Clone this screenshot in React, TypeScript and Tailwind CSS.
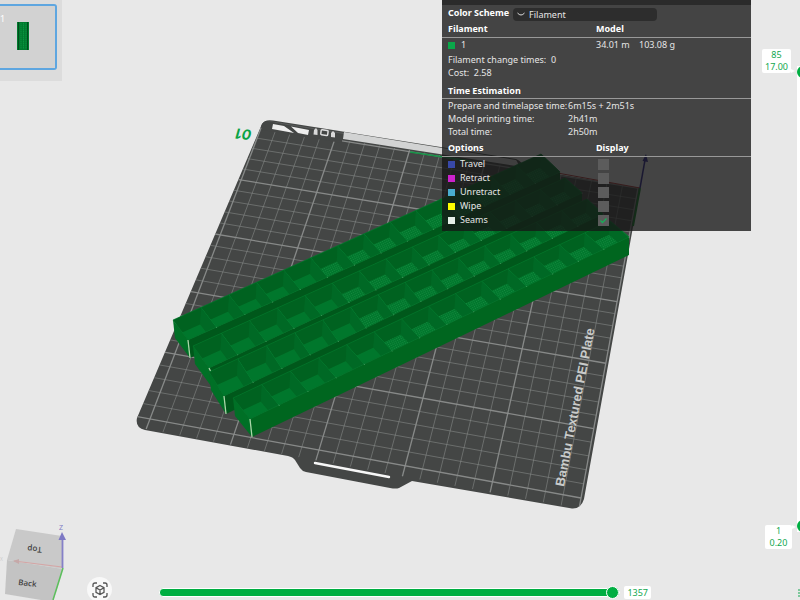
import React from "react";

type Pt = [number, number];

const pts = (list: Pt[]) => list.map((p) => `${p[0].toFixed(1)},${p[1].toFixed(1)}`).join(" ");
const mix = (a: Pt, b: Pt, t: number): Pt => [a[0] + (b[0] - a[0]) * t, a[1] + (b[1] - a[1]) * t];
const add = (a: Pt, d: Pt): Pt => [a[0] + d[0], a[1] + d[1]];

// Perspective map of the unit square onto a quad, corners in clockwise order.
function project([p0, p1, p2, p3]: [Pt, Pt, Pt, Pt]) {
  const dx1 = p1[0] - p2[0], dx2 = p3[0] - p2[0], sx = p0[0] - p1[0] + p2[0] - p3[0];
  const dy1 = p1[1] - p2[1], dy2 = p3[1] - p2[1], sy = p0[1] - p1[1] + p2[1] - p3[1];
  const det = dx1 * dy2 - dx2 * dy1;
  const g = (sx * dy2 - dx2 * sy) / det;
  const h = (dx1 * sy - sx * dy1) / det;
  return (u: number, v: number): Pt => {
    const w = g * u + h * v + 1;
    return [
      ((p1[0] - p0[0] + g * p1[0]) * u + (p3[0] - p0[0] + h * p3[0]) * v + p0[0]) / w,
      ((p1[1] - p0[1] + g * p1[1]) * u + (p3[1] - p0[1] + h * p3[1]) * v + p0[1]) / w,
    ];
  };
}

const bed = project([[261, 128], [638, 188], [581, 498], [150, 419]]);
const steps = Array.from({ length: 27 }, (_, i) => i - 1);

function Grid() {
  return (
    <g fill="none" stroke="#8b8d8c" clipPath="url(#plate)">
      {steps.map((i) => {
        const a = bed(i / 25, -0.005), b = bed(i / 25, 1.03);
        const c = bed(-0.04, i / 25), d = bed(1, i / 25);
        const bold = i % 5 === 0;
        return (
          <g key={i} strokeWidth={bold ? 1.3 : 0.8} strokeOpacity={bold ? 0.95 : 0.7}>
            <line x1={a[0]} y1={a[1]} x2={b[0]} y2={b[1]} />
            {i >= 0 && <line x1={c[0]} y1={c[1]} x2={d[0]} y2={d[1]} />}
          </g>
        );
      })}
    </g>
  );
}

interface Bar { bl: Pt; br: Pt; fr: Pt; fl: Pt }
const bars: Bar[] = [
  { bl: [173, 320], br: [541, 154], fr: [560, 172], fl: [188, 340] },
  { bl: [193, 346], br: [565, 178], fr: [582, 193], fl: [209, 368] },
  { bl: [209, 372], br: [587, 199], fr: [603, 214], fl: [224, 396] },
  { bl: [233, 398], br: [610, 221], fr: [629, 237], fl: [250, 419] },
];
const CELLS = 14;
const along = (i: number) => ((i / CELLS) * 1.08) / (1 + (0.08 * i) / CELLS);

function Tray({ bar, index }: { bar: Bar; index: number }) {
  const { bl, br, fr, fl } = bar;
  const down: Pt = [2, 18];
  const cells = Array.from({ length: CELLS }, (_, i) => {
    const a = mix(bl, br, along(i)), b = mix(bl, br, along(i + 1));
    const c = mix(fl, fr, along(i + 1)), d = mix(fl, fr, along(i));
    return { a, b, c, d, depth: [-1, 17 - i * 0.25] as Pt };
  });
  return (
    <g>
      <polygon points={pts([bl, fl, add(fl, down), add(bl, down)])} fill="#007026" />
      <polygon points={pts([fl, fr, add(fr, [0, 18]), add(fl, down)])} fill={index === 3 ? "#00661f" : "#00581b"} />
      <polygon points={pts([bl, br, fr, fl])} fill="#006b26" />
      {cells.map(({ a, b, c, d, depth }, i) => {
        const id = `cell-${index}-${i}`;
        return (
          <g key={id}>
            <clipPath id={id}><polygon points={pts([a, b, c, d])} /></clipPath>
            <g clipPath={`url(#${id})`}>
              <polygon points={pts([add(a, depth), add(b, depth), add(c, depth), add(d, depth)])} fill="#00772c" />
              <polygon points={pts([a, b, add(b, depth), add(a, depth)])} fill="#006220" />
              <polygon points={pts([b, c, add(c, depth), add(b, depth)])} fill="#006925" />
              {i > 4 && (
                <polygon points={pts([add(a, depth), add(b, depth), add(c, depth), add(d, depth)])} fill="url(#mesh)" />
              )}
            </g>
            <line x1={b[0]} y1={b[1]} x2={c[0]} y2={c[1]} stroke="#078537" strokeWidth="0.9" />
            <circle cx={c[0]} cy={c[1]} r="0.6" fill="#8cc79b" />
          </g>
        );
      })}
      <polygon points={pts([bl, br, fr, fl])} fill="none" stroke="#03782d" strokeWidth="0.7" />
      <line x1={fl[0]} y1={fl[1]} x2={fl[0] + 2} y2={fl[1] + (index === 1 ? 4 : 18)} stroke="#a9d6a8" strokeWidth="1.3" />
    </g>
  );
}

const PLATE =
  "M262 124 Q265 119 273 120.500 L516 159 Q522 161 525 169 L640 188 L584 499 Q581 509 572 508.500 L412 481 L399 488 Q396 489 390 488 L306 472 Q302 471 300 468 L295 460 Q293 457 288 456 L145 430 Q135 428 137 418 Z";

function Scene() {
  return (
    <svg className="absolute left-0 top-0 h-[600px] w-[800px]" viewBox="0 0 800 600" aria-label="Sliced plate preview">
      <defs>
        <clipPath id="plate"><path d={PLATE} /></clipPath>
        <pattern id="mesh" width="2" height="2" patternUnits="userSpaceOnUse" patternTransform="rotate(-25)">
          <rect width="1" height="1" fill="#27964e" fillOpacity="0.6" />
        </pattern>
      </defs>
      <path d={PLATE} fill="#444645" />
      <path d="M262.500 125 Q265 121 272 122 L516 161" fill="none" stroke="#6a6c6b" strokeWidth="0.6" />
      <Grid />
      <path d="M258 119 L300 128 L342 135 V143 L262 130 Z" fill="#444645" clipPath="url(#plate)" />
      <path d="M273 124 L284 126 L294 133 L272 129 Z M291 126.500 L309 130 L308 135 L298 133 Z" fill="#eee" />
      <path d="M314 130 l2 -2 l1.500 2 v5 l-4 -0.500 z M331 133 l2 -2 l2 2 v4.500 l-4 -0.500 z" fill="#d9d9d9" />
      <rect x="321" y="130" width="7" height="5" rx="1" fill="none" stroke="#ddd" strokeWidth="1.500" transform="rotate(8 324 132)" />
      <path d="M344 132 L516 160 Q520 165 516 166 L343 139 Z" fill="#d2d3d3" />
      <path d="M410 152 L470 161" stroke="#159447" strokeWidth="1.500" />
      <path d="M315 463 L389 477" stroke="#f7f7f7" strokeWidth="2.400" strokeLinecap="round" />
      <path d="M541 170 L640 188" stroke="#a33" strokeWidth="1" />
      <path d="M640 188 L633 226" stroke="#0a7a20" strokeWidth="2" />
      <path d="M640 188 L645 160" stroke="#2a2391" strokeWidth="1.500" />
      <path d="M642.500 161 L646 154 L648 162 Z" fill="#2a2391" />
      {bars.map((bar, i) => <Tray key={i} bar={bar} index={i} />)}
      <text transform="translate(564 487) rotate(-79)" fontFamily="'Liberation Sans', sans-serif" fontWeight="700" fontSize="13" fill="#c9cbca">
        Bambu Textured PEI Plate
      </text>
      <text transform="translate(252 130) rotate(186)" fontFamily="Inter, sans-serif" fontWeight="700" fontStyle="italic" fontSize="14" fill="#0aa345">
        01
      </text>
    </svg>
  );
}

function ViewCube() {
  return (
    <svg className="absolute bottom-0 left-0 h-20 w-20" viewBox="0 520 80 80" aria-label="View orientation">
      <path d="M16 529 L62 536 L63 569 L7 560 Z" fill="#c9c9c9" />
      <path d="M7 560 L63 569 L53 602 L5 594 Z" fill="#c3c3c3" />
      <path d="M14 561 L62 567" stroke="#d5a5a5" strokeWidth="1.200" />
      <path d="M13 561 l6 -2 v5 z" fill="#c5a9a9" />
      <path d="M63 568 L53 600" stroke="#5cbf5c" strokeWidth="1.500" />
      <path d="M62.500 568 V538" stroke="#8580c8" strokeWidth="1.800" />
      <path d="M58.500 540 L62 532 L66 540 Z" fill="#7d78c4" />
      <g fontFamily="'Open Sans', sans-serif" fill="#444">
        <text x="59" y="530" fontSize="7" fill="#7d78c4">Z</text>
        <text transform="translate(42 547) rotate(184)" fontSize="8" fontWeight="600">Top</text>
        <text transform="translate(18 585) rotate(6)" fontSize="8" fontWeight="600">Back</text>
        <text x="0" y="561" fontSize="5" fill="#ccc">X</text>
      </g>
    </svg>
  );
}

const options = [
  { name: "Travel", swatch: "bg-[#3848a8]", on: false },
  { name: "Retract", swatch: "bg-[#cd22cd]", on: false },
  { name: "Unretract", swatch: "bg-[#49adcf]", on: false },
  { name: "Wipe", swatch: "bg-[#ffff00]", on: false },
  { name: "Seams", swatch: "bg-[#e6f0e8]", on: true },
];

const times = [
  ["Prepare and timelapse time:", "6m15s + 2m51s"],
  ["Model printing time:", "2h41m"],
  ["Total time:", "2h50m"],
];

function Legend() {
  return (
    <section className="absolute left-[442px] top-0 w-[309px] bg-[#161616]/78 pb-1 text-[9px] text-[#e6e6e6]">
      <div className="h-[5px] bg-[#262626]/80" />
      <div className="flex h-4 items-center gap-1 pl-[6px]">
        <label htmlFor="scheme" className="font-bold text-white">Color Scheme</label>
        <div className="relative mt-[2px]">
          <select id="scheme" className="block h-[13px] w-[144px] appearance-none rounded-sm bg-[#2d2d2d] pl-4 text-[9px] leading-[13px]">
            <option>Filament</option>
          </select>
          <svg className="pointer-events-none absolute left-1 top-1 h-[5px] w-2" viewBox="0 0 8 5">
            <path d="M0.500 1 Q4 5 7.500 1" fill="none" stroke="#ddd" />
          </svg>
        </div>
      </div>
      <table className="w-full table-fixed border-collapse text-left">
        <colgroup><col className="w-[154px]" /><col className="w-[43px]" /><col /></colgroup>
        <thead>
          <tr className="h-4 border-b border-[#999] text-white">
            <th className="p-0 pl-[6px] font-bold leading-4">Filament</th>
            <th className="p-0 font-bold leading-4" colSpan={2}>Model</th>
          </tr>
        </thead>
        <tbody>
          <tr className="h-[14px] leading-[14px]">
            <td className="p-0 pl-[6px]">
              <span className="flex items-center gap-[6px]"><span className="size-[7px] bg-[#0aa84a]" />1</span>
            </td>
            <td className="p-0">34.01 m</td>
            <td className="p-0">103.08 g</td>
          </tr>
        </tbody>
      </table>
      <div className="mt-px pl-[6px] leading-[13px]">
        <p>Filament change times:&nbsp; 0</p>
        <p>Cost:&nbsp; 2.58</p>
      </div>
      <h2 className="mt-1 border-b border-[#999] pl-[6px] font-bold leading-[15px] text-white">Time Estimation</h2>
      <dl className="grid grid-cols-[120px_1fr] pl-[6px] leading-[13px]">
        {times.map(([label, value]) => (
          <React.Fragment key={label}>
            <dt className="whitespace-nowrap">{label}</dt>
            <dd>{value}</dd>
          </React.Fragment>
        ))}
      </dl>
      <table className="mt-[2px] w-full table-fixed border-collapse text-left">
        <colgroup><col className="w-[154px]" /><col /></colgroup>
        <thead>
          <tr className="h-4 border-b border-[#999] text-white">
            <th className="p-0 pl-[6px] font-bold leading-4">Options</th>
            <th className="p-0 font-bold leading-4">Display</th>
          </tr>
        </thead>
        <tbody>
          {options.map((o) => (
            <tr key={o.name} className="h-[14px] leading-[14px]">
              <td className="p-0 pl-[6px]">
                <label htmlFor={o.name} className="flex items-center gap-[5px]">
                  <span className={`size-[7px] ${o.swatch}`} />{o.name}
                </label>
              </td>
              <td className="p-0">
                <span className="relative ml-[2px] block size-[11px]">
                  <input id={o.name} type="checkbox" defaultChecked={o.on} className="block size-[11px] appearance-none bg-[#5c5c5c]" />
                  {o.on && (
                    <svg className="pointer-events-none absolute inset-0" viewBox="0 0 11 11">
                      <path d="M2.500 5.500 L4.500 7.500 L8.500 3.500" fill="none" stroke="#18b058" strokeWidth="1.300" />
                    </svg>
                  )}
                </span>
              </td>
            </tr>
          ))}
        </tbody>
      </table>
    </section>
  );
}

function LayerTag({ layer, height, place, notch }: { layer: string; height: string; place: string; notch: string }) {
  return (
    <div className={`absolute ${place} rounded-xs bg-white text-center text-[9px] leading-[12px] text-[#12a850]`}>
      <div>{layer}</div>
      <div>{height}</div>
      <svg className={`absolute left-full h-1 w-1 ${notch}`} viewBox="0 0 4 4"><path d="M0 0 L4 2 L0 4 Z" fill="#fff" /></svg>
    </div>
  );
}

const vertical =
  "absolute inset-0 m-0 h-full w-3 appearance-none bg-transparent [writing-mode:vertical-lr] [direction:rtl] [&::-webkit-slider-thumb]:size-3 [&::-webkit-slider-thumb]:appearance-none [&::-webkit-slider-thumb]:rounded-full [&::-webkit-slider-thumb]:bg-[#00ae42]";

export default function App() {
  return (
    <main className="relative h-screen min-h-[600px] w-full overflow-hidden bg-[#e8e8e8] font-['Noto_Sans',sans-serif]">
      <Scene />

      <aside className="absolute left-0 top-0 h-[81px] w-[62px] bg-[#dcdcdc] pt-1">
        <button aria-label="Plate 1" className="relative block h-[66px] w-[57px] rounded-r-[3px] border-2 border-l-0 border-[#5ea6e0] bg-[#d2d2d2]">
          <span className="absolute left-0 top-[6px] text-[9px] text-white">1</span>
          <svg className="absolute left-[17px] top-4 h-7 w-3" viewBox="0 0 12 28">
            <rect width="12" height="28" fill="#007a2e" />
            <path d="M1.500 0 V28 M10.500 0 V28" stroke="#004d1c" />
            <path d="M4 1 V27 M6.500 1 V27 M9 1 V27" stroke="#0b9440" strokeDasharray="1.500 0.500" />
          </svg>
        </button>
      </aside>

      <Legend />

      <LayerTag layer="85" height="17.00" place="right-[9px] top-[49px] w-[29px]" notch="bottom-0" />
      <LayerTag layer="1" height="0.20" place="right-2 top-[525px] w-[27px]" notch="top-0" />
      <div className="absolute -right-[9px] top-[66px] h-[466px] w-3 bg-white">
        <input type="range" aria-label="Top layer" min={1} max={85} defaultValue={85} className={vertical} />
        <input type="range" aria-label="Bottom layer" min={1} max={85} defaultValue={1} className={vertical} />
      </div>
      <svg className="absolute bottom-[3px] right-0 h-2 w-[2px]" viewBox="0 0 2 8"><path d="M0 1 H2 M0 4 H2 M0 7 H2" stroke="#12a850" /></svg>

      <ViewCube />
      <button aria-label="Fit view" className="absolute bottom-[-2px] left-[87px] flex size-[25px] items-center justify-center rounded-full bg-[#f8f8f8]">
        <svg className="size-4" viewBox="0 0 16 16" fill="none" stroke="#555" strokeWidth="1.300">
          <path d="M1 5 V3 Q1 1 3 1 H5 M11 1 H13 Q15 1 15 3 V5 M15 11 V13 Q15 15 13 15 H11 M5 15 H3 Q1 15 1 13 V11" />
          <path d="M8 3.500 L12 5.700 V10.300 L8 12.500 L4 10.300 V5.700 Z M4 5.700 L8 8 L12 5.700 M8 8 V12.500" />
        </svg>
      </button>

      <div className="absolute bottom-px left-[159px] right-[149px] flex items-center gap-1">
        <input
          type="range"
          aria-label="Move"
          min={0}
          max={1357}
          defaultValue={1357}
          className="m-0 h-3 min-w-0 flex-1 appearance-none bg-transparent [&::-webkit-slider-runnable-track]:h-[9px] [&::-webkit-slider-runnable-track]:rounded-sm [&::-webkit-slider-runnable-track]:border [&::-webkit-slider-runnable-track]:border-white [&::-webkit-slider-runnable-track]:bg-[#00ae42] [&::-webkit-slider-thumb]:-mt-[3px] [&::-webkit-slider-thumb]:size-[13px] [&::-webkit-slider-thumb]:appearance-none [&::-webkit-slider-thumb]:rounded-full [&::-webkit-slider-thumb]:border [&::-webkit-slider-thumb]:border-white [&::-webkit-slider-thumb]:bg-[#00ae42]"
        />
        <output className="rounded-xs bg-white px-[3px] text-[9px] leading-[13px] text-[#12a850]">1357</output>
      </div>
    </main>
  );
}
